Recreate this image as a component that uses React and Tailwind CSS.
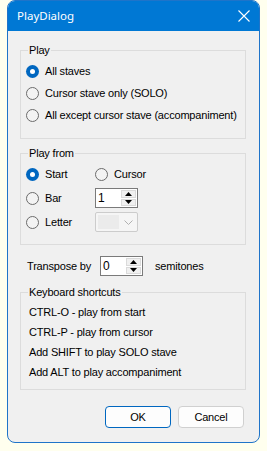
const BODY_FONT = { fontFamily: '"Liberation Sans", Arial, sans-serif' };

function Radio({ checked }) {
  if (checked) {
    return (
      <span className="flex items-center justify-center w-[13px] h-[13px] rounded-full bg-[#0067c0] shrink-0">
        <span className="w-[5px] h-[5px] rounded-full bg-white" />
      </span>
    );
  }
  return <span className="w-[13px] h-[13px] rounded-full border border-[#6b6b6b] bg-[#f3f3f3] shrink-0" />;
}

function RadioRow({ checked, label, className = '' }) {
  return (
    <div className={`flex items-center gap-[6px] ${className}`}>
      <Radio checked={checked} />
      <span>{label}</span>
    </div>
  );
}

function Group({ label, className = '', children }) {
  return (
    <div className={`relative ml-[12px] w-[226px] border border-[#dcdcdc] ${className}`}>
      <span className="absolute -top-[8px] left-[7px] px-[1px] bg-[#f0f0f0] leading-[14px]">{label}</span>
      {children}
    </div>
  );
}

function SpinBox({ value }) {
  return (
    <div className="flex w-[43px] h-[20px] border border-[#7a7a7a] bg-white">
      <span className="flex-1 pl-[2px] leading-[18px] text-[12px]">{value}</span>
      <div className="flex flex-col w-[15px] my-[1px] mr-[1px] gap-[1px]">
        <div className="flex-1 flex items-center justify-center bg-[#f0f0f0] border border-[#dadada]">
          <svg width="7" height="4" viewBox="0 0 7 4"><path d="M3.5 0 L7 4 L0 4 Z" fill="#000" /></svg>
        </div>
        <div className="flex-1 flex items-center justify-center bg-[#f0f0f0] border border-[#dadada]">
          <svg width="7" height="4" viewBox="0 0 7 4"><path d="M0 0 L7 0 L3.5 4 Z" fill="#000" /></svg>
        </div>
      </div>
    </div>
  );
}

function DisabledCombo() {
  return (
    <div className="flex items-center w-[43px] h-[20px] border border-[#cccccc] bg-[#f5f5f5] rounded-[2px]">
      <span className="ml-[2px] w-[21px] h-[14px] bg-[#ebebeb]" />
      <svg className="ml-[5px]" width="9" height="5" viewBox="0 0 9 5">
        <path d="M0.5 0.5 L4.5 4.5 L8.5 0.5" fill="none" stroke="#b0b0b0" strokeWidth="1" />
      </svg>
    </div>
  );
}

export default function App() {
  return (
    <div className="min-h-screen bg-[#ffffee] pt-0" style={BODY_FONT}>
      <div className="ml-[7px] w-[253px] h-[443px] border border-[#1f74c9] rounded-[8px] overflow-hidden bg-[#f0f0f0] text-[11px] tracking-[-0.18px] text-black">
        {/* Title bar */}
        <div className="flex items-center justify-between h-[30px] bg-[#0078d4] pl-[9px] pr-[9px]">
          <span className="text-white text-[11.5px] tracking-normal" style={{ fontFamily: '"Noto Sans", "Open Sans", sans-serif' }}>
            PlayDialog
          </span>
          <svg width="12" height="12" viewBox="0 0 12 12">
            <path d="M0.5 0.5 L11.5 11.5 M11.5 0.5 L0.5 11.5" stroke="#fff" strokeWidth="1.1" fill="none" />
          </svg>
        </div>

        {/* Play */}
        <Group label="Play" className="mt-[19px] h-[89px] pt-[9px]">
          <RadioRow checked label="All staves" className="h-[22px] pl-[5px]" />
          <RadioRow label="Cursor stave only (SOLO)" className="h-[22px] pl-[5px]" />
          <RadioRow label="All except cursor stave (accompaniment)" className="h-[22px] pl-[5px]" />
        </Group>

        {/* Play from */}
        <Group label="Play from" className="mt-[14px] h-[92px] pt-[8px]">
          <div className="flex items-center h-[24px]">
            <RadioRow checked label="Start" className="w-[74px] pl-[5px]" />
            <RadioRow label="Cursor" />
          </div>
          <div className="flex items-center h-[24px]">
            <RadioRow label="Bar" className="w-[74px] pl-[5px]" />
            <SpinBox value="1" />
          </div>
          <div className="flex items-center h-[24px]">
            <RadioRow label="Letter" className="w-[74px] pl-[5px]" />
            <DisabledCombo />
          </div>
        </Group>

        {/* Transpose */}
        <div className="flex items-center h-[20px] mt-[11px] pl-[19px]">
          <span className="w-[73px]">Transpose by</span>
          <SpinBox value="0" />
          <span className="ml-[12px]">semitones</span>
        </div>

        {/* Keyboard shortcuts */}
        <Group label="Keyboard shortcuts" className="mt-[16px] h-[98px] pt-[9px] pl-[8px]">
          <div className="h-[20px] flex items-center">CTRL-O - play from start</div>
          <div className="h-[20px] flex items-center">CTRL-P - play from cursor</div>
          <div className="h-[20px] flex items-center">Add SHIFT to play SOLO stave</div>
          <div className="h-[20px] flex items-center">Add ALT to play accompaniment</div>
        </Group>

        {/* Buttons */}
        <div className="flex justify-end gap-[7px] mt-[16px] pr-[15px]">
          <button className="w-[66px] h-[22px] rounded-[4px] border border-[#0067c0] bg-[#fdfdfd] text-[11px]">OK</button>
          <button className="w-[66px] h-[22px] rounded-[4px] border border-[#d0d0d0] bg-[#fdfdfd] text-[11px]">Cancel</button>
        </div>
      </div>
    </div>
  );
}
